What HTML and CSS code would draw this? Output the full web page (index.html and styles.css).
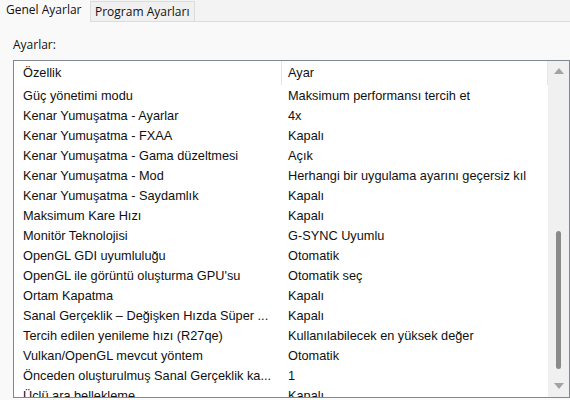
FILE: index.html
```
<!DOCTYPE html>
<html lang="tr">
<head>
    <meta charset="UTF-8">
    <title>Ayarlar</title>
    <link rel="stylesheet" href="styles.css">
</head>
<body>

<div class="tabs">
    <div class="tab active">Genel Ayarlar</div>
    <div class="tab">Program Ayarları</div>
    <div class="tab-rest"></div>
</div>

<div class="page">
    <div class="label">Ayarlar:</div>

    <div class="list">
        <div class="list-body">
            <div class="row head">
                <div class="col name">Özellik</div>
                <div class="col value">Ayar</div>
            </div>
            <div class="row"><div class="col name">Güç yönetimi modu</div><div class="col value">Maksimum performansı tercih et</div></div>
            <div class="row"><div class="col name">Kenar Yumuşatma - Ayarlar</div><div class="col value">4x</div></div>
            <div class="row"><div class="col name">Kenar Yumuşatma - FXAA</div><div class="col value">Kapalı</div></div>
            <div class="row"><div class="col name">Kenar Yumuşatma - Gama düzeltmesi</div><div class="col value">Açık</div></div>
            <div class="row"><div class="col name">Kenar Yumuşatma - Mod</div><div class="col value">Herhangi bir uygulama ayarını geçersiz kıl</div></div>
            <div class="row"><div class="col name">Kenar Yumuşatma - Saydamlık</div><div class="col value">Kapalı</div></div>
            <div class="row"><div class="col name">Maksimum Kare Hızı</div><div class="col value">Kapalı</div></div>
            <div class="row"><div class="col name">Monitör Teknolojisi</div><div class="col value">G-SYNC Uyumlu</div></div>
            <div class="row"><div class="col name">OpenGL GDI uyumluluğu</div><div class="col value">Otomatik</div></div>
            <div class="row"><div class="col name">OpenGL ile görüntü oluşturma GPU'su</div><div class="col value">Otomatik seç</div></div>
            <div class="row"><div class="col name">Ortam Kapatma</div><div class="col value">Kapalı</div></div>
            <div class="row"><div class="col name">Sanal Gerçeklik – Değişken Hızda Süper ...</div><div class="col value">Kapalı</div></div>
            <div class="row"><div class="col name">Tercih edilen yenileme hızı (R27qe)</div><div class="col value">Kullanılabilecek en yüksek değer</div></div>
            <div class="row"><div class="col name">Vulkan/OpenGL mevcut yöntem</div><div class="col value">Otomatik</div></div>
            <div class="row"><div class="col name">Önceden oluşturulmuş Sanal Gerçeklik ka...</div><div class="col value">1</div></div>
            <div class="row"><div class="col name">Üçlü ara bellekleme</div><div class="col value">Kapalı</div></div>
        </div>

        <div class="scrollbar">
            <div class="arrow up"></div>
            <div class="track">
                <div class="thumb"></div>
            </div>
            <div class="arrow down"></div>
        </div>
    </div>
</div>

</body>
</html>
```

FILE: styles.css
```
* {
    margin: 0;
    padding: 0;
    box-sizing: border-box;
}

body {
    width: 570px;
    height: 400px;
    overflow: hidden;
    background: #f9f9f9;
    font-family: "Liberation Sans", Arial, sans-serif;
    font-size: 12.75px;
    color: #101010;
}

.tabs {
    display: flex;
    height: 22px;
    background: #f3f3f3;
}

.tab {
    white-space: nowrap;
    font-family: "Open Sans", sans-serif;
    font-size: 12px;
}

.tab.active {
    width: 90px;
    padding: 0 6px;
    line-height: 19px;
    background: #f9f9f9;
}

.tab:not(.active) {
    margin-top: 1px;
    width: 105px;
    padding: 0 4px;
    line-height: 19px;
    background: #f0f0f0;
    border: 1px solid #dcdcdc;
}

.tab-rest {
    flex: 1;
    border-bottom: 1px solid #dcdcdc;
}

.page {
    padding: 13px 0 0 13px;
}

.label {
    line-height: 19px;
    margin-bottom: 6px;
    font-family: "Open Sans", sans-serif;
    font-size: 12px;
}

.list {
    display: flex;
    width: 557px;
    height: 338px;
    background: #fff;
    border: 1px solid #828790;
}

.list-body {
    flex: 1;
    overflow: hidden;
}

.row {
    display: flex;
    height: 20px;
    align-items: center;
}

.row.head {
    height: 24px;
}

.col.name {
    width: 268px;
    padding-left: 9px;
    white-space: nowrap;
}

.col.value {
    flex: 1;
    padding-left: 6px;
    white-space: nowrap;
}

.head .col {
    height: 24px;
    line-height: 24px;
}

.head .col.name {
    border-right: 1px solid #e5e5e5;
}

.head .col.value {
    border-right: 1px solid #e5e5e5;
}

.scrollbar {
    width: 21px;
    display: flex;
    flex-direction: column;
    align-items: center;
    background: #f0f0f0;
}

.arrow {
    width: 0;
    height: 0;
    border-left: 5px solid transparent;
    border-right: 5px solid transparent;
}

.arrow.up {
    margin-top: 7px;
    border-bottom: 6px solid #a3a3a3;
}

.arrow.down {
    margin-bottom: 8px;
    border-top: 6px solid #a3a3a3;
}

.track {
    flex: 1;
    width: 100%;
    display: flex;
    flex-direction: column;
    align-items: center;
}

.thumb {
    margin-top: 157px;
    width: 5px;
    height: 138px;
    border-radius: 3px;
    background: #8a8a8a;
}
```
